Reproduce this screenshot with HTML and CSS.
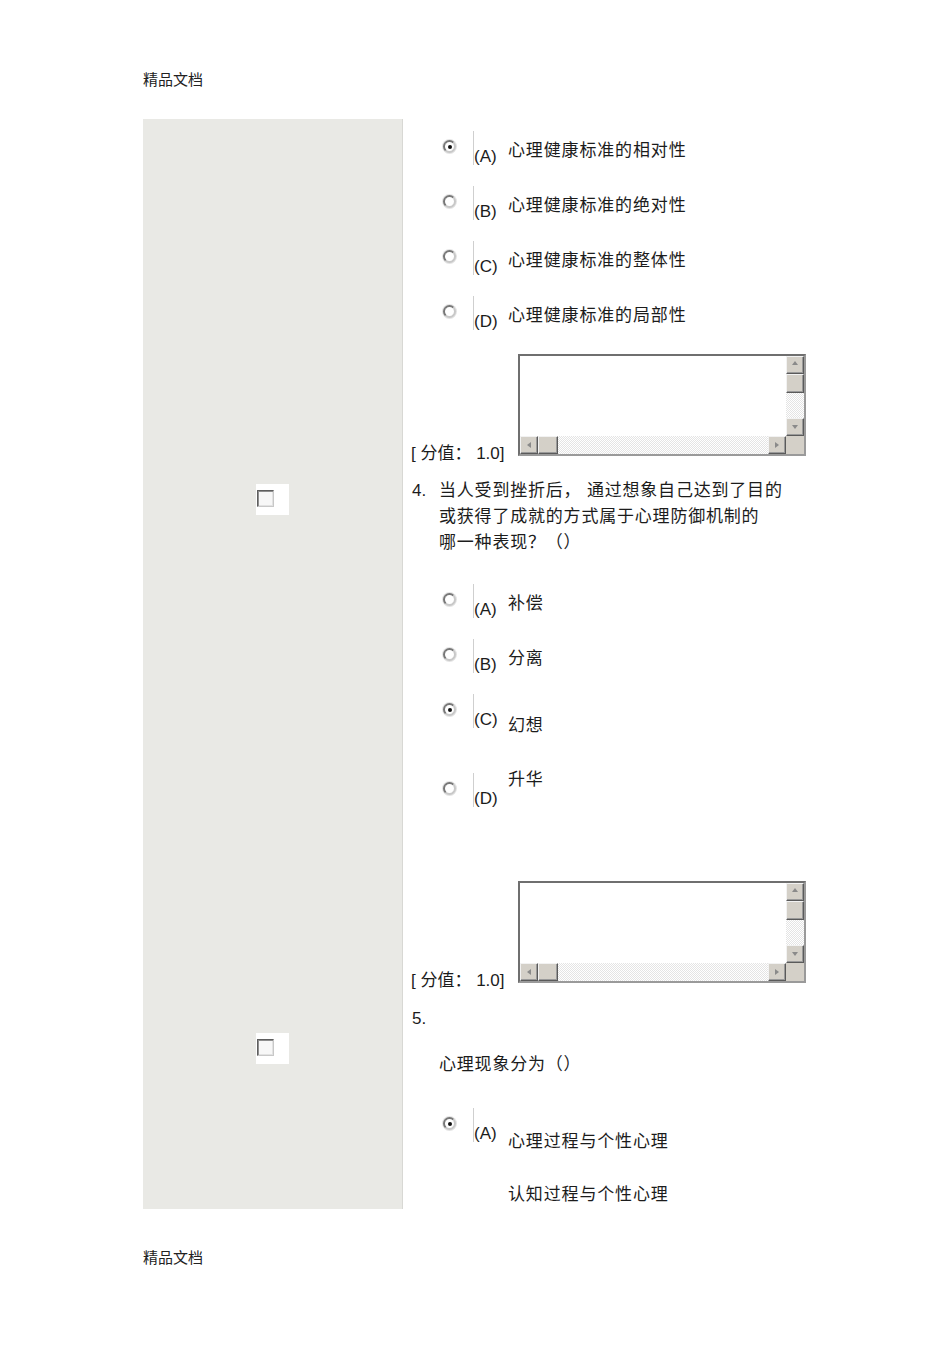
FILE: index.html
```html
<!DOCTYPE html>
<html lang="zh">
<head>
<meta charset="utf-8">
<title>精品文档</title>
<link rel="stylesheet" href="styles.css">
</head>
<body>
<div class="page">
  <header class="doc-mark doc-head">精品文档</header>
  <div class="sheet">
    <div class="side"></div>
    <div class="cell cell-q3">
      <div class="opt">
        <span class="radio is-on"></span>
        <span class="opt-key">(A)</span>
        <span class="opt-text">心理健康标准的相对性</span>
      </div>
      <div class="opt">
        <span class="radio"></span>
        <span class="opt-key">(B)</span>
        <span class="opt-text">心理健康标准的绝对性</span>
      </div>
      <div class="opt">
        <span class="radio"></span>
        <span class="opt-key">(C)</span>
        <span class="opt-text">心理健康标准的整体性</span>
      </div>
      <div class="opt">
        <span class="radio"></span>
        <span class="opt-key">(D)</span>
        <span class="opt-text">心理健康标准的局部性</span>
      </div>
      <div class="score-row score-row-q3">
        <span class="score">[ 分值： 1.0]</span>
        <div class="scrollbox">
          <div class="sb-area"></div>
          <div class="sb-v">
            <span class="sb-btn sb-up"></span>
            <span class="sb-thumb"></span>
            <span class="sb-track"></span>
            <span class="sb-btn sb-down"></span>
          </div>
          <div class="sb-h">
            <span class="sb-btn sb-left"></span>
            <span class="sb-thumb"></span>
            <span class="sb-track"></span>
            <span class="sb-btn sb-right"></span>
          </div>
          <span class="sb-corner"></span>
        </div>
      </div>
    </div>

    <div class="side side-q4"><span class="chk-wrap"><span class="chk"></span></span></div>
    <div class="cell cell-q4">
      <div class="q">
        <span class="num">4.</span>
        <p class="stem">当人受到挫折后， 通过想象自己达到了目的<br>或获得了成就的方式属于心理防御机制的<br>哪一种表现？（）</p>
      </div>
      <div class="opt opt-first">
        <span class="radio"></span>
        <span class="opt-key">(A)</span>
        <span class="opt-text">补偿</span>
      </div>
      <div class="opt">
        <span class="radio"></span>
        <span class="opt-key">(B)</span>
        <span class="opt-text">分离</span>
      </div>
      <div class="opt opt-gap">
        <span class="radio is-on"></span>
        <span class="opt-key">(C)</span>
        <span class="opt-text txt-low">幻想</span>
      </div>
      <div class="opt">
        <span class="radio"></span>
        <span class="opt-key">(D)</span>
        <span class="opt-text txt-high">升华</span>
      </div>
      <div class="score-row score-row-q4">
        <span class="score">[ 分值： 1.0]</span>
        <div class="scrollbox">
          <div class="sb-area"></div>
          <div class="sb-v">
            <span class="sb-btn sb-up"></span>
            <span class="sb-thumb"></span>
            <span class="sb-track"></span>
            <span class="sb-btn sb-down"></span>
          </div>
          <div class="sb-h">
            <span class="sb-btn sb-left"></span>
            <span class="sb-thumb"></span>
            <span class="sb-track"></span>
            <span class="sb-btn sb-right"></span>
          </div>
          <span class="sb-corner"></span>
        </div>
      </div>
    </div>

    <div class="side side-q5"><span class="chk-wrap"><span class="chk"></span></span></div>
    <div class="cell cell-q5">
      <div class="num-line">5.</div>
      <p class="stem stem-solo">心理现象分为（）</p>
      <div class="opt opt-q5">
        <span class="radio is-on"></span>
        <span class="opt-key">(A)</span>
        <span class="opt-text txt-lower">心理过程与个性心理</span>
      </div>
      <div class="opt-orphan">认知过程与个性心理</div>
    </div>
  </div>
  <footer class="doc-mark doc-foot">精品文档</footer>
</div>
</body>
</html>
```

FILE: styles.css
```css
html, body {
  margin: 0;
  padding: 0;
  background: #fff;
}

body {
  font-family: "Liberation Sans", "Noto Sans CJK SC", sans-serif;
  color: #1c1c1c;
  font-size: 17px;
}

.page {
  padding-left: 143px;
}

.doc-mark {
  font-size: 15px;
  line-height: 18px;
  color: #222;
}

.doc-head {
  box-sizing: border-box;
  height: 119px;
  padding-top: 71px;
}

.doc-foot {
  margin-top: 40px;
}

.sheet {
  display: grid;
  grid-template-columns: 260px 1fr;
  grid-template-rows: auto auto 1fr;
  width: 680px;
  height: 1090px;
  overflow: hidden;
}

.side {
  background: #e9e9e5;
  border-right: 1px solid #d8d8d4;
}

.side-q4 { padding-top: 28px; }
.side-q5 { padding-top: 50px; }

.chk-wrap {
  display: block;
  box-sizing: border-box;
  width: 33px;
  height: 31px;
  margin-left: 113px;
  padding: 6px 0 0 1px;
  background: #fff;
}

.chk {
  display: block;
  box-sizing: border-box;
  width: 17px;
  height: 17px;
  border: 1px solid;
  border-color: #5e5e5e #c8c8c8 #c8c8c8 #5e5e5e;
  box-shadow: inset 1px 1px 0 #8e8e8e, inset -1px -1px 0 #e2e2e2;
  background: #f7f7f7;
}

.cell {
  display: flex;
  flex-direction: column;
  align-items: flex-start;
}

.cell-q3 { padding-top: 12px; }
.cell-q4 { padding-top: 22px; }
.cell-q5 { padding-top: 23px; }

/* options */
.opt {
  display: flex;
  align-items: flex-start;
  height: 34px;
  margin: 0 0 21px 40px;
}

.opt-first { margin-top: 28px; }
.opt-gap { margin-bottom: 45px; }
.opt-q5 { margin-top: 30px; margin-bottom: 0; }

.radio {
  position: relative;
  flex: none;
  box-sizing: border-box;
  width: 13px;
  height: 13px;
  margin: 9px 17px 0 0;
  border-radius: 50%;
  border: 2px solid;
  border-color: #777 #c8c8c8 #c8c8c8 #777;
  background: #fff;
  box-shadow: 0 0 0 1px #e4e4e4;
}

.radio.is-on::after {
  content: "";
  position: absolute;
  left: 2.5px;
  top: 2.5px;
  width: 4px;
  height: 4px;
  border-radius: 50%;
  background: #111;
}

.opt-key {
  flex: none;
  box-sizing: border-box;
  width: 35px;
  height: 34px;
  border-left: 1px solid #cfcfcf;
  padding-top: 16px;
  line-height: 20px;
  font-size: 17px;
}

.opt-text {
  margin-top: 10px;
  line-height: 20px;
  letter-spacing: 0.85px;
  white-space: nowrap;
}

.txt-low { margin-top: 22px; }
.txt-high { margin-top: -3px; }
.txt-lower { margin-top: 24px; }

.opt-orphan {
  margin: 43px 0 0 105px;
  line-height: 20px;
  letter-spacing: 0.85px;
}

/* question stems */
.q {
  display: flex;
  margin-left: 9px;
}

.num {
  width: 27px;
  line-height: 26px;
  flex: none;
}

.num-line {
  margin-left: 9px;
  line-height: 26px;
}

.stem {
  margin: 0;
  line-height: 26px;
  letter-spacing: 0.8px;
  white-space: nowrap;
}

.stem-solo {
  margin: 20px 0 0 36px;
}

/* score + scroll box */
.score-row {
  display: flex;
  align-items: flex-end;
  margin-left: 8px;
}

.score-row-q3 { margin-top: 3px; }
.score-row-q4 { margin-top: 53px; }

.score {
  width: 107px;
  line-height: 20px;
  margin-bottom: -8px;
  white-space: nowrap;
}

.scrollbox {
  box-sizing: border-box;
  width: 288px;
  height: 102px;
  display: grid;
  grid-template-columns: 1fr 18px;
  grid-template-rows: 1fr 18px;
  border: 2px solid;
  border-color: #6f6f6f #9a9a9a #9a9a9a #6f6f6f;
  background: #fff;
}

.sb-area { background: #fff; }

.sb-v {
  display: flex;
  flex-direction: column;
}

.sb-h {
  display: flex;
}

.sb-btn,
.sb-thumb {
  position: relative;
  box-sizing: border-box;
  flex: none;
  width: 18px;
  height: 18px;
  background: #d4d0c8;
  border: 1px solid;
  border-color: #f2f2f2 #5a5a5a #5a5a5a #f2f2f2;
  box-shadow: inset -1px -1px 0 #9a9a9a;
}

.sb-v .sb-thumb { height: 19px; }
.sb-h .sb-thumb { width: 20px; }

.sb-track {
  flex: 1;
  background: repeating-conic-gradient(#e4e4e4 0 25%, #fff 0 50%) 0 0 / 2px 2px;
}

.sb-corner {
  background: #d4d0c8;
}

.sb-btn::before {
  content: "";
  position: absolute;
  width: 0;
  height: 0;
  border: 3px solid transparent;
}

.sb-up::before {
  left: 5px;
  top: 4px;
  border-bottom: 4px solid #8a8a8a;
  border-top: 0;
  border-left-width: 3.5px;
  border-right-width: 3.5px;
}

.sb-down::before {
  left: 5px;
  top: 6px;
  border-top: 4px solid #8a8a8a;
  border-bottom: 0;
  border-left-width: 3.5px;
  border-right-width: 3.5px;
}

.sb-left::before {
  left: 6px;
  top: 5px;
  border-right: 4px solid #8a8a8a;
  border-left: 0;
  border-top-width: 3.5px;
  border-bottom-width: 3.5px;
}

.sb-right::before {
  left: 6px;
  top: 5px;
  border-left: 4px solid #8a8a8a;
  border-right: 0;
  border-top-width: 3.5px;
  border-bottom-width: 3.5px;
}
```
